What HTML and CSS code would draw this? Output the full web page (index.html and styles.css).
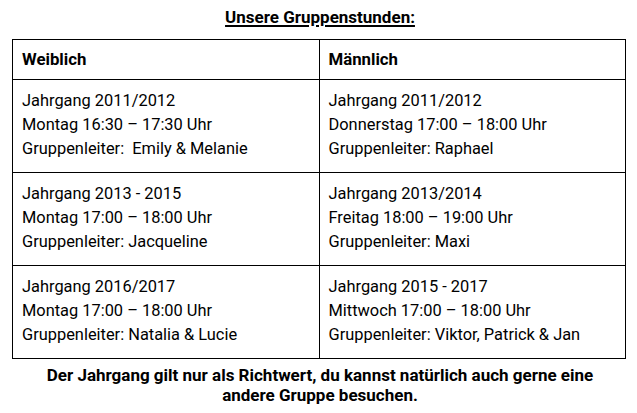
FILE: index.html
```html
<!DOCTYPE html>
<html lang="de">
<head>
<meta charset="utf-8">
<title>Gruppenstunden</title>
<link rel="stylesheet" href="styles.css">
</head>
<body>
<div class="page">
  <h1 class="title">Unsere Gruppenstunden:</h1>
  <table class="schedule">
    <tr class="head">
      <th>Weiblich</th>
      <th>Männlich</th>
    </tr>
    <tr>
      <td><p>Jahrgang 2011/2012</p><p>Montag 16:30 – 17:30 Uhr</p><p>Gruppenleiter:&nbsp; Emily &amp; Melanie</p></td>
      <td><p>Jahrgang 2011/2012</p><p>Donnerstag 17:00 – 18:00 Uhr</p><p>Gruppenleiter: Raphael</p></td>
    </tr>
    <tr>
      <td><p>Jahrgang 2013 - 2015</p><p>Montag 17:00 – 18:00 Uhr</p><p>Gruppenleiter: Jacqueline</p></td>
      <td><p>Jahrgang 2013/2014</p><p>Freitag 18:00 – 19:00 Uhr</p><p>Gruppenleiter: Maxi</p></td>
    </tr>
    <tr>
      <td><p>Jahrgang 2016/2017</p><p>Montag 17:00 – 18:00 Uhr</p><p>Gruppenleiter: Natalia &amp; Lucie</p></td>
      <td><p>Jahrgang 2015 - 2017</p><p>Mittwoch 17:00 – 18:00 Uhr</p><p>Gruppenleiter: Viktor, Patrick &amp; Jan</p></td>
    </tr>
  </table>
  <p class="note">Der Jahrgang gilt nur als Richtwert, du kannst natürlich auch gerne eine<br>andere Gruppe besuchen.</p>
</div>
</body>
</html>
```

FILE: styles.css
```css
html, body {
  margin: 0;
  padding: 0;
  background: #fff;
}
body {
  font-family: Roboto, "Liberation Sans", sans-serif;
  color: #000;
  font-size: 16.4px;
}
.page {
  width: 637px;
  padding-top: 7px;
}
.title {
  margin: 0 0 12px 0;
  font-size: 17px;
  font-weight: 700;
  line-height: 20px;
  text-align: center;
  text-decoration: underline;
  text-decoration-thickness: 1.5px;
  text-underline-offset: 2px;
  padding-left: 3px;
}
.schedule {
  margin-left: 12px;
  width: 614px;
  border-collapse: collapse;
  table-layout: fixed;
}
.schedule th,
.schedule td {
  border: 1px solid #000;
  text-align: left;
  vertical-align: top;
  padding: 9px 9px 11px 9px;
  line-height: 24px;
}
.schedule th {
  font-size: 16.8px;
  font-weight: 700;
  padding: 7px 9px 8px 9px;
}
.schedule p {
  margin: 0;
}
.note {
  margin: 6px 0 0 0;
  padding-left: 3px;
  font-size: 17px;
  text-align: center;
  font-weight: 700;
  line-height: 20px;
}
```
